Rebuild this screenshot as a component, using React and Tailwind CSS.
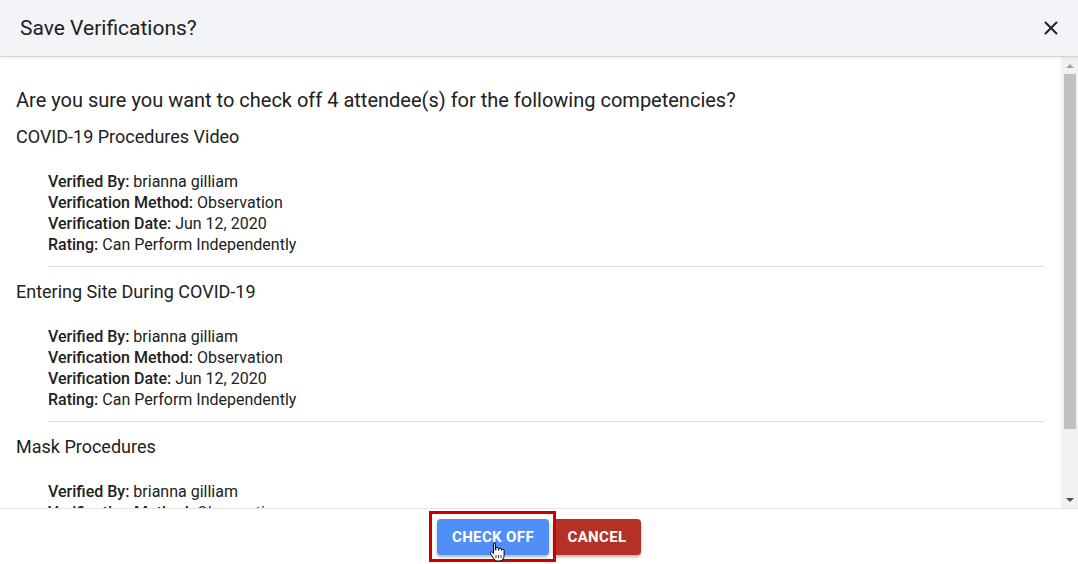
import React from 'react';
import { X } from 'lucide-react';

const competencies = [
  'COVID-19 Procedures Video',
  'Entering Site During COVID-19',
  'Mask Procedures',
];

const Detail = ({ label, value }) => (
  <div className="whitespace-nowrap">
    <span className="font-medium">{label}:</span> {value}
  </div>
);

const Section = ({ title, last }) => (
  <div>
    <div className="h-6 text-[18px] leading-6">{title}</div>
    <div className="mt-[22px] pl-8 text-[16px] leading-[21px]">
      <Detail label="Verified By" value="brianna gilliam" />
      <Detail label="Verification Method" value="Observation" />
      <Detail label="Verification Date" value="Jun 12, 2020" />
      <Detail label="Rating" value="Can Perform Independently" />
    </div>
    {!last && <div className="ml-8 mt-[11px] mb-[13px] h-px bg-[#dedede]" />}
  </div>
);

export default function App() {
  return (
    <div
      className="w-[1078px] h-[564px] flex flex-col bg-white text-[#212121] overflow-hidden"
      style={{ fontFamily: 'Roboto, "Liberation Sans", sans-serif' }}
    >
      {/* Header */}
      <div className="h-[57px] shrink-0 flex items-center justify-between pl-5 pr-4 bg-[#f3f4f8] border-b border-[#d4d4d4] shadow-[0_2px_3px_rgba(0,0,0,0.06)] relative z-10">
        <h2 className="text-[21px] leading-6">Save Verifications?</h2>
        <X size={22} strokeWidth={2.2} className="text-[#222]" />
      </div>

      {/* Body */}
      <div className="flex-1 min-h-0 flex">
        <div className="flex-1 overflow-hidden pl-4 pr-4 pt-[31px]">
          <p className="text-[20px] leading-6 mb-[13px] whitespace-nowrap">
            Are you sure you want to check off 4 attendee(s) for the following competencies?
          </p>
          {competencies.map((c, i) => (
            <Section key={c} title={c} last={i === competencies.length - 1} />
          ))}
        </div>

        {/* scrollbar */}
        <div className="w-[17px] shrink-0 bg-[#f1f1f1] flex flex-col items-center">
          <div className="h-[17px] w-full flex items-center justify-center">
            <div className="w-0 h-0 border-l-[4px] border-r-[4px] border-b-[4px] border-l-transparent border-r-transparent border-b-[#a3a3a3]" />
          </div>
          <div className="w-[12px] h-[355px] bg-[#c1c1c1]" />
          <div className="flex-1" />
          <div className="h-[17px] w-full flex items-center justify-center">
            <div className="w-0 h-0 border-l-[4px] border-r-[4px] border-t-[4px] border-l-transparent border-r-transparent border-t-[#505050]" />
          </div>
        </div>
      </div>

      {/* Footer */}
      <div className="h-[56px] shrink-0 border-t border-[#e4e4e4] flex items-center justify-center pt-px">
        <div className="relative flex items-center gap-1">
          <button className="h-9 w-[112px] rounded bg-[#4f8ff7] text-white text-[15px] font-bold tracking-wide shadow-[0_2px_3px_rgba(0,0,0,0.3)]">
            CHECK OFF
          </button>
          <button className="h-9 w-[88px] rounded bg-[#b53127] text-white text-[15px] font-bold tracking-wide shadow-[0_2px_3px_rgba(0,0,0,0.3)]">
            CANCEL
          </button>
          {/* highlight box */}
          <div className="absolute -left-2 -top-2 w-[127px] h-[51px] border-[3px] border-[#cc0000]" />
          <svg
            className="absolute left-[52px] top-[22px]"
            width="16"
            height="21"
            viewBox="0 0 16 21"
          >
            <path
              d="M5 1.5c.8 0 1.4.6 1.4 1.4V9h.4V7.6c0-.8.6-1.3 1.3-1.3s1.3.6 1.3 1.3V9.2h.4V8.4c0-.8.6-1.3 1.3-1.3s1.3.6 1.3 1.3v1h.3c0-.7.6-1.2 1.2-1.2.7 0 1.2.6 1.2 1.3v4.8c0 2.8-1.6 5.7-4.6 5.7H8.7c-1.8 0-2.9-.9-3.9-2.4L1.7 13c-.5-.7-.3-1.5.3-1.9.6-.4 1.4-.2 1.8.4l.8 1.2V2.9c0-.8.6-1.4 1.4-1.4z"
              fill="white"
              stroke="black"
              strokeWidth="1"
              strokeLinejoin="round"
            />
            <path d="M7 14v3M9.5 14v3M12 14v3" stroke="black" strokeWidth="0.8" />
          </svg>
        </div>
      </div>
    </div>
  );
}
